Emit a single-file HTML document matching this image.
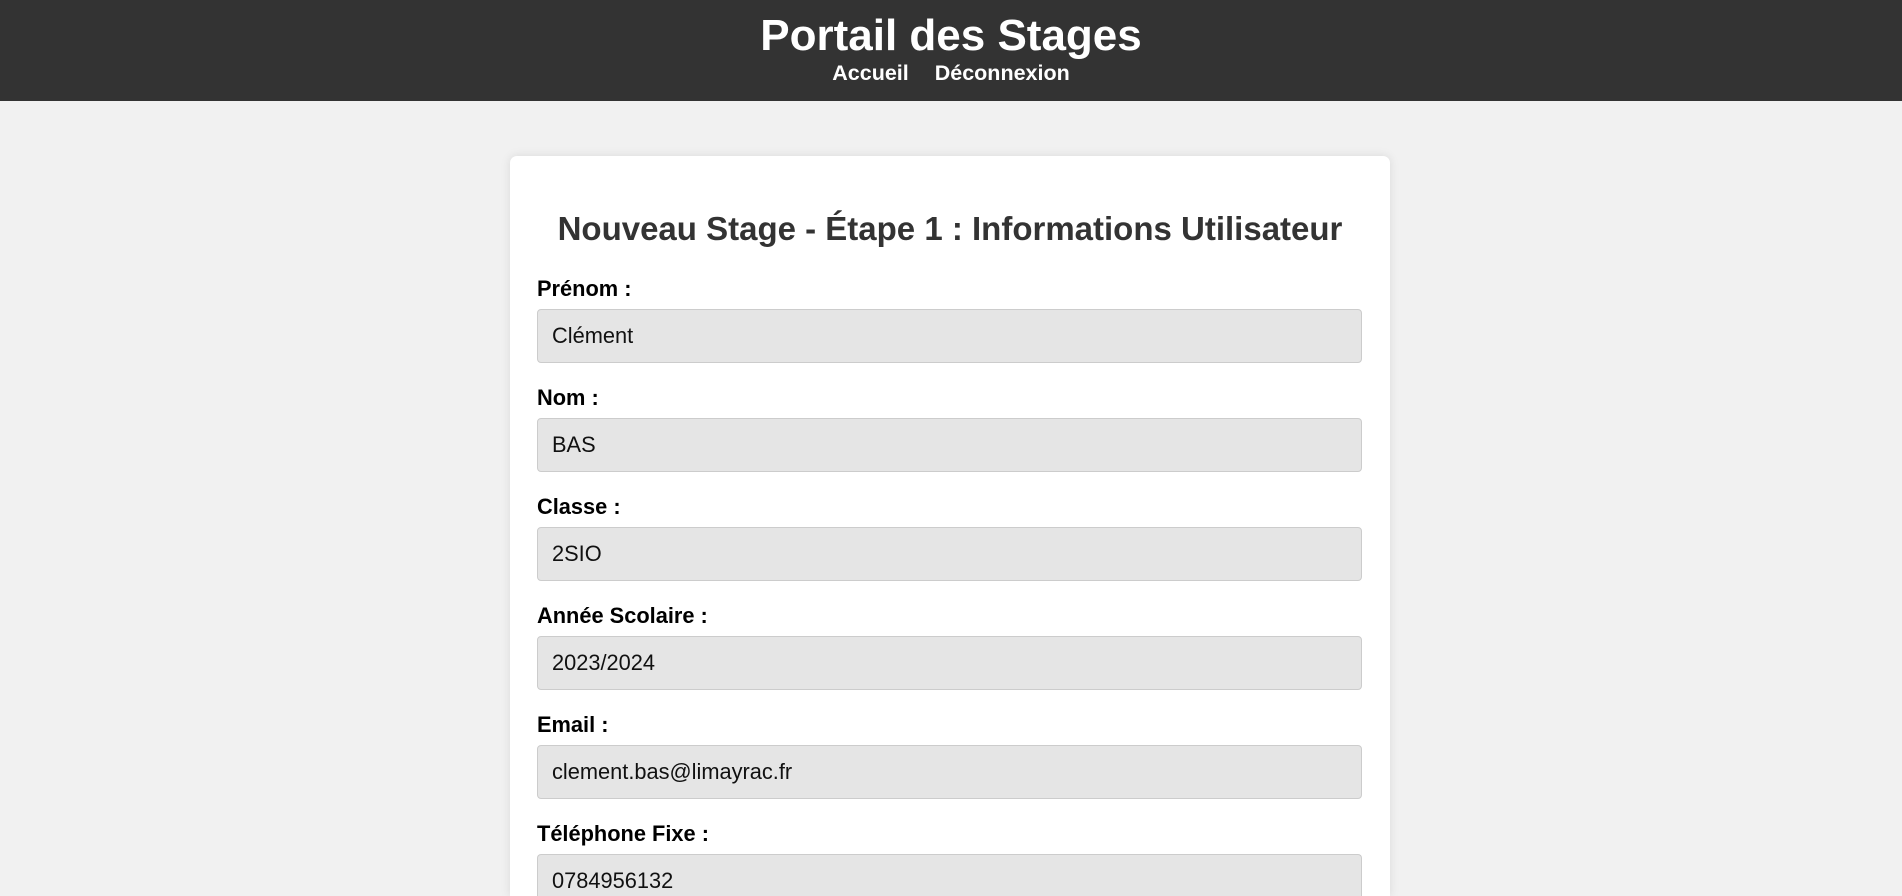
<!DOCTYPE html>
<html><head><meta charset="utf-8"><style>
html,body{margin:0;padding:0;overflow:hidden;height:896px}
body{width:1902px;height:896px;overflow:hidden;background:#f1f1f1;font-family:"Liberation Sans",Arial,sans-serif;position:relative}
.hdr{position:absolute;left:0;top:0;width:1902px;height:101px;background:#333;color:#fff;text-align:center}
.hdr h1{position:absolute;left:0;right:0;top:9px;margin:0;font-size:44px;line-height:54px;font-weight:bold}
.nav{position:absolute;left:0;right:0;top:60px;font-size:21.5px;font-weight:bold;line-height:26px}
.nav span{margin:0 13px}
.card{position:absolute;left:510px;top:156px;width:880px;height:740px;background:#fff;border-radius:7px 7px 0 0;box-shadow:0 0 10px rgba(0,0,0,0.1)}
.title{position:absolute;left:510px;width:880px;top:209px;text-align:center;font-size:33px;font-weight:bold;color:#333;line-height:40px}
.lbl{position:absolute;left:537px;font-size:21.8px;font-weight:bold;color:#000;line-height:24px}
.inp{position:absolute;left:537px;width:825px;height:54px;box-sizing:border-box;background:#e5e5e5;border:1px solid #ccc;border-radius:4px;font-size:21.8px;line-height:52px;padding-left:14px;color:#111}
</style></head><body>
<div class="hdr"><h1>Portail des Stages</h1><div class="nav"><span>Accueil</span><span>Déconnexion</span></div></div>
<div class="card"></div>
<div class="title">Nouveau Stage - Étape 1 : Informations Utilisateur</div>
<div class="lbl" style="top:277px">Prénom :</div><div class="inp" style="top:309px">Clément</div>
<div class="lbl" style="top:386px">Nom :</div><div class="inp" style="top:418px">BAS</div>
<div class="lbl" style="top:495px">Classe :</div><div class="inp" style="top:527px">2SIO</div>
<div class="lbl" style="top:604px">Année Scolaire :</div><div class="inp" style="top:636px">2023/2024</div>
<div class="lbl" style="top:713px">Email :</div><div class="inp" style="top:745px">clement.bas@limayrac.fr</div>
<div class="lbl" style="top:822px">Téléphone Fixe :</div><div class="inp" style="top:854px;height:42px;border-bottom:none;border-radius:4px 4px 0 0">0784956132</div>
</body></html>
